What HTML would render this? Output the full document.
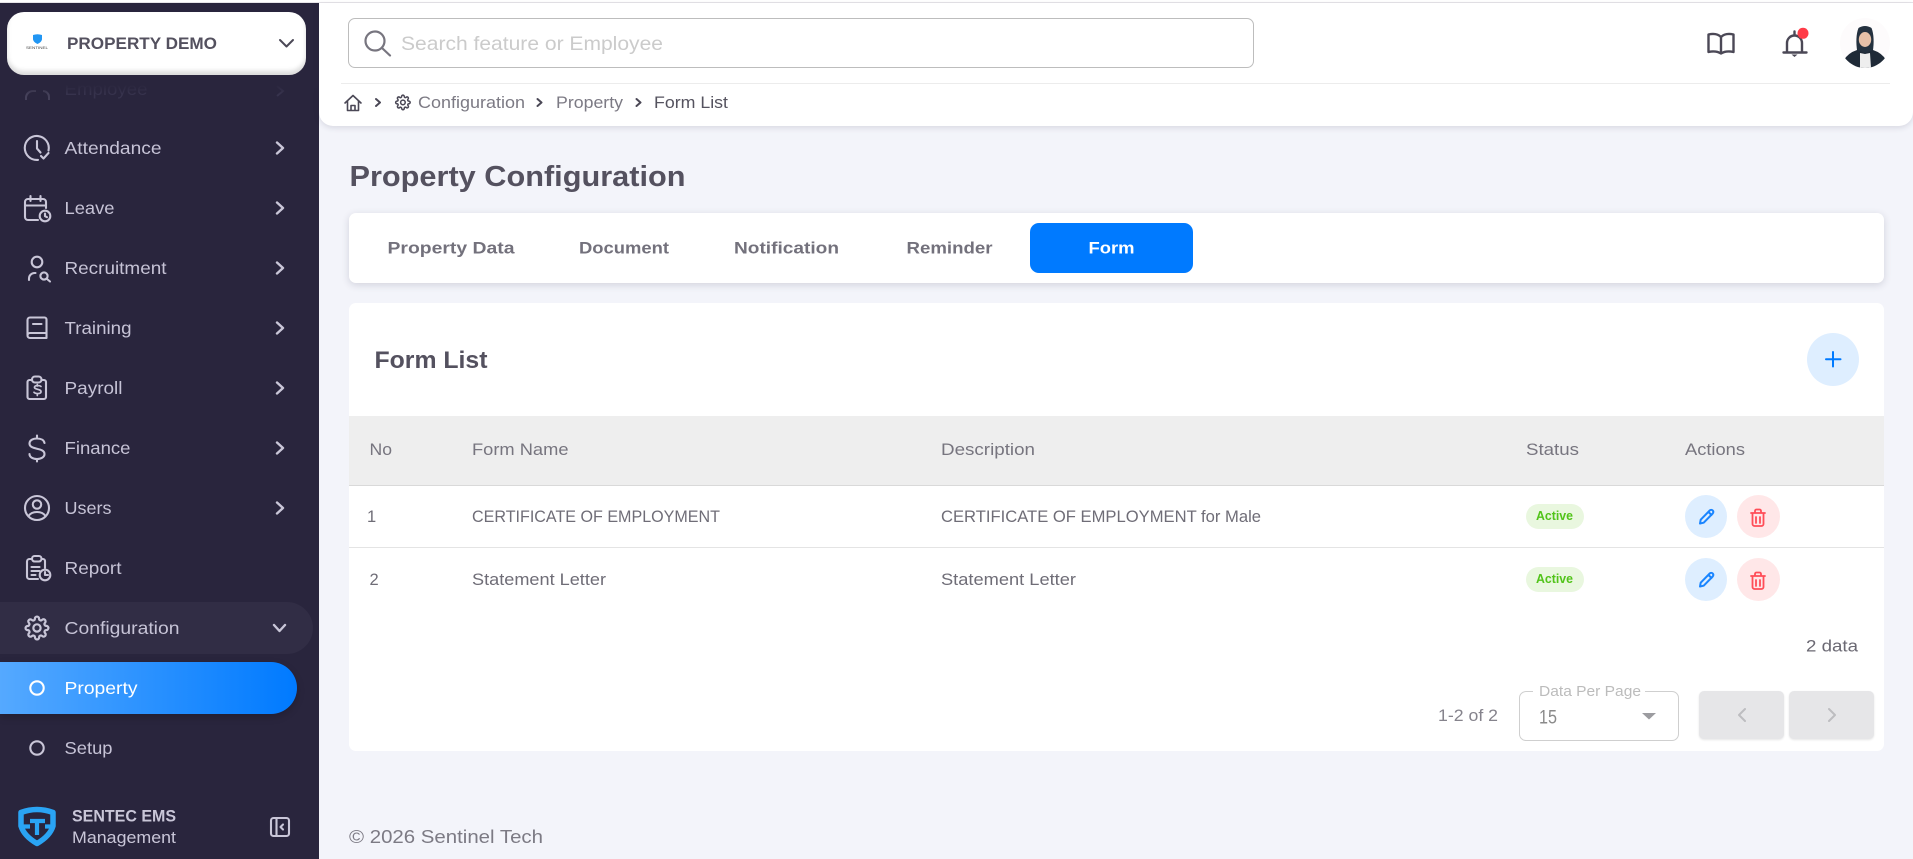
<!DOCTYPE html>
<html lang="en"><head><meta charset="utf-8"><title>Property Configuration</title>
<style>
html,body{margin:0;padding:0;width:1913px;height:859px;overflow:hidden;background:#f3f4fa;font-family:"Liberation Sans",sans-serif}
.b{position:absolute;box-sizing:border-box}
svg{position:absolute;left:0;top:0}
text{font-family:"Liberation Sans",sans-serif}
.nav text{font-size:17.5px;fill:#c6c3d6}
.ni{fill:none;stroke:#c9c6d8;stroke-width:2.1;stroke-linecap:round;stroke-linejoin:round}
.th{font-size:16.5px;fill:#77757f}
.td{font-size:16.5px;fill:#6f6d77}
</style></head><body>
<div class="b" style="left:0;top:0;width:1913px;height:3px;background:#fff;border-bottom:1px solid #e6e4e8"></div>
<div class="b" style="left:0;top:3px;width:319px;height:856px;background:#29253d"></div>
<div class="b" style="left:0;top:602px;width:313px;height:52px;background:#312d45;border-radius:0 26px 26px 0"></div>
<div class="b" style="left:0;top:662px;width:297px;height:52px;background:linear-gradient(90deg,#55a9ff,#007aff);border-radius:0 26px 26px 0;box-shadow:0 3px 8px rgba(0,0,0,.18)"></div>
<div class="b" style="left:319px;top:3px;width:1594px;height:123px;background:#fff;border-radius:0 0 14px 14px;box-shadow:0 2px 6px rgba(40,40,70,.13)"></div>
<div class="b" style="left:348px;top:18px;width:906px;height:50px;border:1px solid #bdbdbd;border-radius:7px"></div>
<div class="b" style="left:341px;top:83px;width:1549px;height:1px;background:#ececec"></div>
<div class="b" style="left:349px;top:213px;width:1535px;height:70px;background:#fff;border-radius:7px;box-shadow:0 2px 8px rgba(40,40,70,.16)"></div>
<div class="b" style="left:1030px;top:223px;width:163px;height:50px;background:#007aff;border-radius:9px"></div>
<div class="b" style="left:349px;top:303px;width:1535px;height:448px;background:#fff;border-radius:7px"></div>
<div class="b" style="left:1807px;top:333px;width:52px;height:53px;background:#deeeff;border-radius:50%"></div>
<div class="b" style="left:349px;top:416px;width:1535px;height:70px;background:#eee;border-bottom:1px solid #d9d9d9"></div>
<div class="b" style="left:349px;top:547px;width:1535px;height:1px;background:#e4e4e4"></div>
<div class="b" style="left:1526px;top:504px;width:58px;height:25px;background:#e9f7df;border-radius:13px"></div>
<div class="b" style="left:1526px;top:567px;width:58px;height:25px;background:#e9f7df;border-radius:13px"></div>
<div class="b" style="left:1685px;top:495px;width:42px;height:43px;background:#deeeff;border-radius:50%"></div>
<div class="b" style="left:1737px;top:495px;width:43px;height:43px;background:#ffe7e8;border-radius:50%"></div>
<div class="b" style="left:1685px;top:558px;width:42px;height:43px;background:#deeeff;border-radius:50%"></div>
<div class="b" style="left:1737px;top:558px;width:43px;height:43px;background:#ffe7e8;border-radius:50%"></div>
<div class="b" style="left:1519px;top:691px;width:160px;height:50px;border:1px solid #cfcfcf;border-radius:7px"></div>
<div class="b" style="left:1533px;top:686px;width:112px;height:10px;background:#fff"></div>
<div class="b" style="left:1699px;top:691px;width:85px;height:48px;background:#e6e6e8;border-radius:5px;box-shadow:0 1px 2px rgba(0,0,0,.1)"></div>
<div class="b" style="left:1789px;top:691px;width:85px;height:48px;background:#e6e6e8;border-radius:5px;box-shadow:0 1px 2px rgba(0,0,0,.1)"></div>

<svg width="1913" height="859" viewBox="0 0 1913 859" xmlns="http://www.w3.org/2000/svg">
<defs><linearGradient id="fade" x1="0" y1="0" x2="0" y2="1"><stop offset="0" stop-color="#29253d"/><stop offset=".6" stop-color="#29253d"/><stop offset="1" stop-color="#29253d" stop-opacity="0"/></linearGradient></defs>
<!-- ghost employee -->
<path d="M26 100v-3a7 7 0 0 1 7-6h3M43 91a6 6 0 0 1 6 6v3" fill="none" stroke="#45415a" stroke-width="2"/>
<text x="64.500" y="95" font-size="17.500" fill="#37334d" textLength="83" lengthAdjust="spacingAndGlyphs">Employee</text>
<path d="M277 86l6 5-6 5" fill="none" stroke="#37334d" stroke-width="2"/>
<rect x="0" y="70" width="319" height="24" fill="url(#fade)"/>
</svg>

<div class="b" style="left:7px;top:12px;width:299px;height:63px;background:#fff;border-radius:17px;box-shadow:inset 0 -4px 5px rgba(0,0,0,.14)"></div>

<svg width="1913" height="859" viewBox="0 0 1913 859" xmlns="http://www.w3.org/2000/svg">
<!-- company -->
<path d="M33 35q4.500-1.500 9 0v4.500q-.8 3-4.500 4.500q-3.700-1.500-4.500-4.500z" fill="#2196f3"/>
<text x="26" y="49" font-size="4" fill="#444" textLength="22" lengthAdjust="spacingAndGlyphs">SENTINEL</text>
<text x="67" y="49" font-size="17" font-weight="700" fill="#54515f" textLength="150" lengthAdjust="spacingAndGlyphs">PROPERTY DEMO</text>
<path d="M280 40l6.500 6.500 6.500-6.500" fill="none" stroke="#4b4856" stroke-width="2" stroke-linecap="round" stroke-linejoin="round"/>

<g class="nav">
<text x="64.500" y="154" textLength="97" lengthAdjust="spacingAndGlyphs">Attendance</text>
<text x="64.500" y="214" textLength="50" lengthAdjust="spacingAndGlyphs">Leave</text>
<text x="64.500" y="274" textLength="102" lengthAdjust="spacingAndGlyphs">Recruitment</text>
<text x="64.500" y="334" textLength="67" lengthAdjust="spacingAndGlyphs">Training</text>
<text x="64.500" y="394" textLength="58" lengthAdjust="spacingAndGlyphs">Payroll</text>
<text x="64.500" y="454" textLength="66" lengthAdjust="spacingAndGlyphs">Finance</text>
<text x="64.500" y="514" textLength="47" lengthAdjust="spacingAndGlyphs">Users</text>
<text x="64.500" y="574" textLength="57" lengthAdjust="spacingAndGlyphs">Report</text>
<text x="64.500" y="634" textLength="115" lengthAdjust="spacingAndGlyphs">Configuration</text>
<text x="64.500" y="694" textLength="73" lengthAdjust="spacingAndGlyphs" style="fill:#fff">Property</text>
<text x="64.500" y="754" textLength="48" lengthAdjust="spacingAndGlyphs">Setup</text>
</g>
<g class="ni">
<path d="M48.500 150.500A12 12 0 1 0 38 159.900M37 141v7.500l3.500 4M41 156l2.500 2.500 5-5.500"/>
<path d="M38 220H28a3 3 0 0 1-3-3v-15a3 3 0 0 1 3-3h15a3 3 0 0 1 3 3v6M25 205.500h21M30.500 196v5M40.500 196v5"/><circle cx="45" cy="216" r="5.300"/><path d="M45 213.500v2.700l2 1"/>
<circle cx="37" cy="262" r="5.300"/><path d="M29 280v-1.500a5.500 5.500 0 0 1 5.500-5.500h1"/><circle cx="44" cy="276" r="3.600"/><path d="M47 279l3 2.500"/>
<path d="M27.500 335V320a2.500 2.500 0 0 1 2.500-2.500h14.500a2 2 0 0 1 2 2V338H30a2.500 2.500 0 0 1-2.500-2.500 2.500 2.500 0 0 1 2.500-2.500h16.500M33 324h8.500"/>
<path d="M32 380h-2.500a2 2 0 0 0-2 2v15a2 2 0 0 0 2 2H44a2 2 0 0 0 2-2v-15a2 2 0 0 0-2-2h-2.500"/><rect x="32" y="376.500" width="9.500" height="6" rx="3"/>
<path d="M41 386.500c-1-1.200-6-1.500-6.500.5-.5 3 7 1.500 6.500 5-.3 2-5.500 2-7 .3M37.300 384.500v1.500M37.300 394v1.500" stroke-width="1.700"/>
<path d="M44.500 443c-.5-3-3.500-4.500-7.500-4.500-4.500 0-7.500 2-7.500 5 0 7 15 3.500 15 10.500 0 3-3.200 5-7.500 5-4.500 0-7.500-2-7.500-5M37 435.500v3M37 459v2.500"/>
<circle cx="37" cy="508" r="12"/><circle cx="37" cy="504.500" r="4.200"/><path d="M28.500 516c2-3 5-4 8.500-4s6.500 1 8.500 4"/>
<path d="M32 559h-2.500a2.500 2.500 0 0 0-2.500 2.500v15a2.500 2.500 0 0 0 2.500 2.500H38M41.500 559H43a2 2 0 0 1 2 2v7"/><rect x="32" y="556" width="9.500" height="5.500" rx="2.700"/><path d="M31.500 567h8M31.500 571h8M31.500 575h4"/><circle cx="45" cy="575" r="5.300"/><path d="M45 572v3h3"/>
<g transform="translate(24.500 615.500) scale(1.040)"><circle cx="12" cy="12" r="3.500"/><path d="M19.400 15a1.650 1.650 0 0 0 .33 1.820l.06.06a2 2 0 0 1 0 2.830 2 2 0 0 1-2.830 0l-.06-.06a1.650 1.650 0 0 0-1.820-.33 1.650 1.650 0 0 0-1 1.510V21a2 2 0 0 1-2 2 2 2 0 0 1-2-2v-.09A1.650 1.650 0 0 0 9 19.400a1.650 1.650 0 0 0-1.820.33l-.06.06a2 2 0 0 1-2.830 0 2 2 0 0 1 0-2.830l.06-.06a1.650 1.650 0 0 0 .33-1.820 1.650 1.650 0 0 0-1.510-1H3a2 2 0 0 1-2-2 2 2 0 0 1 2-2h.09A1.650 1.650 0 0 0 4.600 9a1.650 1.650 0 0 0-.33-1.820l-.06-.06a2 2 0 0 1 0-2.830 2 2 0 0 1 2.830 0l.06.06a1.650 1.650 0 0 0 1.820.33H9a1.650 1.650 0 0 0 1-1.510V3a2 2 0 0 1 2-2 2 2 0 0 1 2 2v.09a1.650 1.650 0 0 0 1 1.510 1.650 1.650 0 0 0 1.820-.33l.06-.06a2 2 0 0 1 2.830 0 2 2 0 0 1 0 2.830l-.06.06a1.650 1.650 0 0 0-.33 1.820V9a1.650 1.650 0 0 0 1.510 1H21a2 2 0 0 1 2 2 2 2 0 0 1-2 2h-.09a1.650 1.650 0 0 0-1.510 1z"/></g>
<circle cx="37" cy="688" r="6.700" style="stroke:#fff"/>
<circle cx="37" cy="748" r="6.700"/>
<g stroke-width="2.400"><path d="M277 142.500l6 5.500-6 5.500M277 202.500l6 5.500-6 5.500M277 262.500l6 5.500-6 5.500M277 322.500l6 5.500-6 5.500M277 382.500l6 5.500-6 5.500M277 442.500l6 5.500-6 5.500M277 502.500l6 5.500-6 5.500M274 625l5.500 6 5.500-6"/></g>
<rect x="271" y="818" width="18" height="18" rx="2.500"/><path d="M276.500 818v18M283 824.500l-2.500 2.500 2.500 2.500"/>
</g>
<!-- sidebar logo -->
<path d="M21 812.500Q37 806.500 53 812.500V826Q50 836 37 843.500Q24 836 21 826Z" fill="#29253d" stroke="#2aa4f4" stroke-width="5.500" stroke-linejoin="round"/>
<path d="M30 821H45M37 821V835M22 826.500H30M52 826.500H45" fill="none" stroke="#2aa4f4" stroke-width="4.200"/>
<text x="72" y="821.500" font-size="16.500" font-weight="700" fill="#c9c6d8" textLength="104" lengthAdjust="spacingAndGlyphs">SENTEC EMS</text>
<text x="72" y="843" font-size="16.500" fill="#c9c6d8" textLength="104" lengthAdjust="spacingAndGlyphs">Management</text>

<!-- search -->
<circle cx="375" cy="41" r="9.500" fill="none" stroke="#77757f" stroke-width="2.200"/><path d="M382 48l8 7.500" stroke="#77757f" stroke-width="2.200" stroke-linecap="round"/>
<text x="401" y="50" font-size="19.500" fill="#cbcbcb" textLength="262" lengthAdjust="spacingAndGlyphs">Search feature or Employee</text>
<!-- top right -->
<path d="M1721 37c-3-3-8-3.500-12.500-2.500V52c4.500-1 9.500-.5 12.500 1.500 3-2 8-2.500 12.500-1.500V34.500c-4.500-1-9.500-.5-12.500 2.500zM1721 37v16" fill="none" stroke="#4b4856" stroke-width="2.400" stroke-linejoin="round"/>
<path d="M1783.500 52.500h23M1787 52.500V43a7.500 7.500 0 0 1 15 0v9.500M1794.500 35.500v-4" fill="none" stroke="#4b4856" stroke-width="2.400" stroke-linecap="round"/><path d="M1791.500 54.500h6l-3 2.500z" fill="#4b4856"/>
<circle cx="1803" cy="33.300" r="5.500" fill="#ff3b47"/>
<!-- avatar -->
<clipPath id="av"><circle cx="1865" cy="43" r="25"/></clipPath>
<circle cx="1865" cy="43" r="25" fill="#fdfbfc"/>
<g clip-path="url(#av)">
<path d="M1844 69V60Q1848 53 1857 50H1873Q1882 53 1886 60V69Z" fill="#1f2a37"/>
<path d="M1857 50c-1-7-1-16 1.500-22q6.500-4 13 0c2.500 6 2.500 15 1.500 22l-8 3z" fill="#24313f"/>
<ellipse cx="1865" cy="39.500" rx="6.200" ry="7.500" fill="#e6c0a8"/>
<path d="M1860 53l5 1 5-1 1 15h-11z" fill="#eeeeee"/>
</g>
<!-- breadcrumb -->
<g fill="none" stroke="#4b4856" stroke-width="1.600" stroke-linecap="round" stroke-linejoin="round">
<path d="M345 103l8-7.500 8 7.500M347.500 101v9.500h11V101M351 110.500v-5h4v5"/>
<path d="M376 99l4 3.500-4 3.500M537.500 99l4 3.500-4 3.500M636.500 99l4 3.500-4 3.500" stroke-width="2"/>
<g transform="translate(395 94.500) scale(.66)" stroke-width="2.300"><circle cx="12" cy="12" r="3.500"/><path d="M19.400 15a1.650 1.650 0 0 0 .33 1.820l.06.06a2 2 0 0 1 0 2.830 2 2 0 0 1-2.830 0l-.06-.06a1.650 1.650 0 0 0-1.820-.33 1.650 1.650 0 0 0-1 1.510V21a2 2 0 0 1-2 2 2 2 0 0 1-2-2v-.09A1.650 1.650 0 0 0 9 19.400a1.650 1.650 0 0 0-1.820.33l-.06.06a2 2 0 0 1-2.830 0 2 2 0 0 1 0-2.830l.06-.06a1.650 1.650 0 0 0 .33-1.820 1.650 1.650 0 0 0-1.510-1H3a2 2 0 0 1-2-2 2 2 0 0 1 2-2h.09A1.650 1.650 0 0 0 4.600 9a1.650 1.650 0 0 0-.33-1.820l-.06-.06a2 2 0 0 1 0-2.830 2 2 0 0 1 2.830 0l.06.06a1.650 1.650 0 0 0 1.820.33H9a1.650 1.650 0 0 0 1-1.510V3a2 2 0 0 1 2-2 2 2 0 0 1 2 2v.09a1.650 1.650 0 0 0 1 1.510 1.650 1.650 0 0 0 1.820-.33l.06-.06a2 2 0 0 1 2.830 0 2 2 0 0 1 0 2.830l-.06.06a1.650 1.650 0 0 0-.33 1.820V9a1.650 1.650 0 0 0 1.510 1H21a2 2 0 0 1 2 2 2 2 0 0 1-2 2h-.09a1.650 1.650 0 0 0-1.510 1z"/></g>
</g>
<text x="418" y="108" font-size="16.500" fill="#7c7a84" textLength="107" lengthAdjust="spacingAndGlyphs">Configuration</text>
<text x="556" y="108" font-size="16.500" fill="#7c7a84" textLength="67" lengthAdjust="spacingAndGlyphs">Property</text>
<text x="654" y="108" font-size="16.500" fill="#55535f" textLength="74" lengthAdjust="spacingAndGlyphs">Form List</text>
<!-- title -->
<text x="349.500" y="186" font-size="28.500" font-weight="700" fill="#54515f" textLength="336" lengthAdjust="spacingAndGlyphs">Property Configuration</text>
<!-- tabs -->
<g font-size="17" font-weight="700" fill="#73717c">
<text x="387.500" y="253.500" textLength="127" lengthAdjust="spacingAndGlyphs">Property Data</text>
<text x="579" y="253.500" textLength="90" lengthAdjust="spacingAndGlyphs">Document</text>
<text x="734" y="253.500" textLength="105" lengthAdjust="spacingAndGlyphs">Notification</text>
<text x="906.500" y="253.500" textLength="86" lengthAdjust="spacingAndGlyphs">Reminder</text>
<text x="1088.500" y="253.500" textLength="46" lengthAdjust="spacingAndGlyphs" style="fill:#fff">Form</text>
</g>
<!-- card -->
<text x="374.500" y="368" font-size="24.500" font-weight="700" fill="#54515f" textLength="113" lengthAdjust="spacingAndGlyphs">Form List</text>
<path d="M1833 352v14.500M1826 359.300h14.500" stroke="#007aff" stroke-width="2" stroke-linecap="round"/>
<g class="th">
<text x="369.500" y="455" textLength="22.500" lengthAdjust="spacingAndGlyphs">No</text>
<text x="472" y="455" textLength="96.500" lengthAdjust="spacingAndGlyphs">Form Name</text>
<text x="941" y="455" textLength="94" lengthAdjust="spacingAndGlyphs">Description</text>
<text x="1526" y="455" textLength="53" lengthAdjust="spacingAndGlyphs">Status</text>
<text x="1685" y="455" textLength="60" lengthAdjust="spacingAndGlyphs">Actions</text>
</g>
<g class="td">
<text x="367" y="522">1</text>
<text x="472" y="522" textLength="248" lengthAdjust="spacingAndGlyphs">CERTIFICATE OF EMPLOYMENT</text>
<text x="941" y="522" textLength="320" lengthAdjust="spacingAndGlyphs">CERTIFICATE OF EMPLOYMENT for Male</text>
<text x="369.500" y="585">2</text>
<text x="472" y="585" textLength="134" lengthAdjust="spacingAndGlyphs">Statement Letter</text>
<text x="941" y="585" textLength="135" lengthAdjust="spacingAndGlyphs">Statement Letter</text>
</g>
<g font-size="12.500" font-weight="700" fill="#52c41a">
<text x="1536" y="520" textLength="37" lengthAdjust="spacingAndGlyphs">Active</text>
<text x="1536" y="583" textLength="37" lengthAdjust="spacingAndGlyphs">Active</text>
</g>
<!-- row icons -->
<g fill="none" stroke="#1a85ff" stroke-width="2" stroke-linejoin="round" stroke-linecap="round">
<path d="M1700 523.500l.7-3.800 9-9.200a2 2 0 0 1 3 3l-9 9.200zM1708.500 512l3 3"/>
<path d="M1700 586.500l.7-3.800 9-9.200a2 2 0 0 1 3 3l-9 9.200zM1708.500 575l3 3"/>
</g>
<g fill="none" stroke="#ff4d57" stroke-width="1.800" stroke-linecap="round" stroke-linejoin="round">
<path d="M1751 513h14M1752.500 513v11a2 2 0 0 0 2 2h7a2 2 0 0 0 2-2v-11M1755 513v-2a1.500 1.500 0 0 1 1.500-1.500h3a1.500 1.500 0 0 1 1.500 1.500v2M1756 517v6M1760 517v6"/>
<path d="M1751 576h14M1752.500 576v11a2 2 0 0 0 2 2h7a2 2 0 0 0 2-2v-11M1755 576v-2a1.500 1.500 0 0 1 1.500-1.500h3a1.500 1.500 0 0 1 1.500 1.500v2M1756 580v6M1760 580v6"/>
</g>
<!-- pagination -->
<text x="1806" y="651.500" font-size="17" fill="#6b6973" textLength="52" lengthAdjust="spacingAndGlyphs">2 data</text>
<text x="1438" y="721" font-size="17" fill="#85838c" textLength="60" lengthAdjust="spacingAndGlyphs">1-2 of 2</text>
<text x="1539" y="696" font-size="14.500" fill="#bcbcbc" textLength="102" lengthAdjust="spacingAndGlyphs">Data Per Page</text>
<text x="1539" y="723.500" font-size="19" fill="#8a8a8a" textLength="18" lengthAdjust="spacingAndGlyphs">15</text>
<path d="M1642 713h14l-7 6.500z" fill="#9c9ca0"/>
<path d="M1745 709l-6 6 6 6M1829 709l6 6-6 6" fill="none" stroke="#bdbdc0" stroke-width="2" stroke-linecap="round" stroke-linejoin="round"/>
<!-- footer -->
<text x="349" y="843" font-size="18.500" fill="#7c7a84" textLength="194" lengthAdjust="spacingAndGlyphs">© 2026 Sentinel Tech</text>
</svg>
</body></html>
